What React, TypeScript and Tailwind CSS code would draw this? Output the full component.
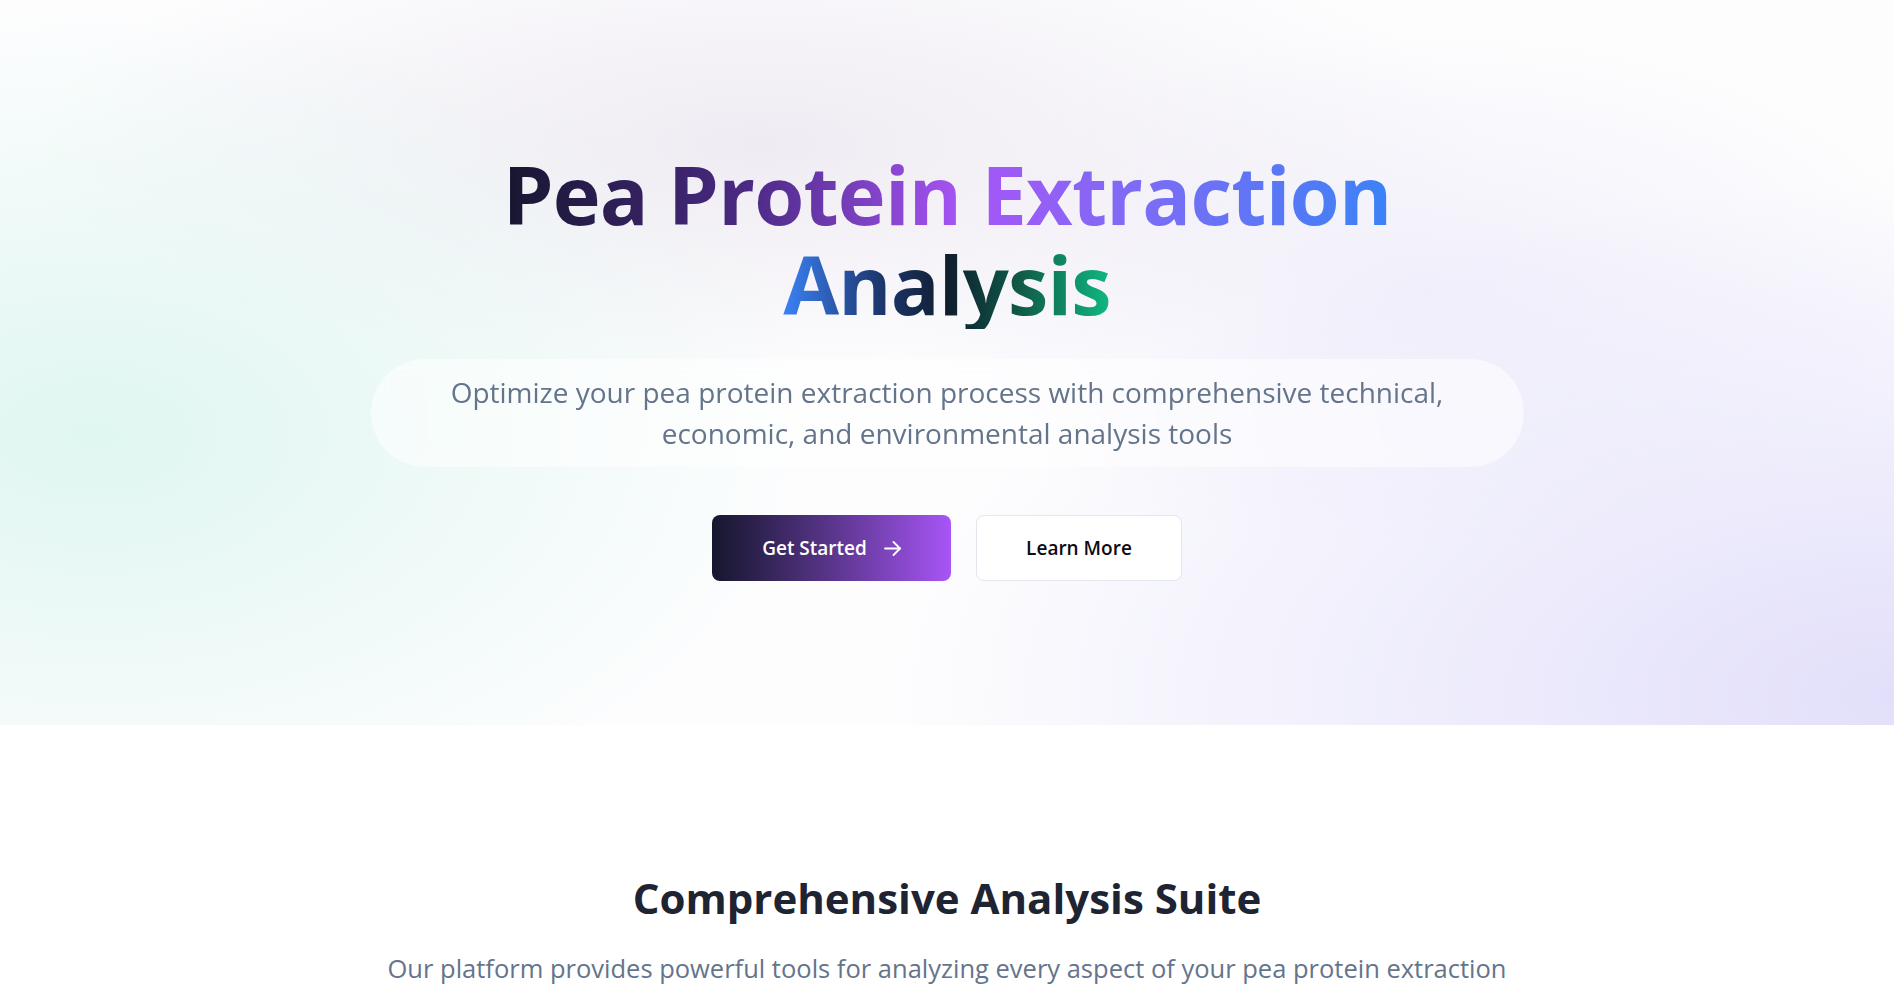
const font = "font-['Open_Sans','Noto_Sans',sans-serif]";

function ArrowIcon() {
  return (
    <svg width="17" height="15" viewBox="0 0 17 15" fill="none" stroke="currentColor" strokeWidth="1.8" strokeLinecap="round" strokeLinejoin="round">
      <path d="M1 7.5h15" />
      <path d="M9.5 1l6.5 6.5-6.5 6.5" />
    </svg>
  );
}

function Hero() {
  return (
    <section className="relative h-[725px] overflow-hidden bg-[#fdfdfe] bg-[radial-gradient(ellipse_48%_74%_at_5%_60%,rgba(222,246,240,0.95),transparent_80%),radial-gradient(ellipse_66%_88%_at_100%_96%,rgba(226,223,250,1),transparent_80%),radial-gradient(ellipse_48%_42%_at_40%_20%,rgba(238,234,242,0.95),transparent_80%),radial-gradient(ellipse_35%_45%_at_75%_40%,rgba(236,234,249,0.7),transparent_80%)]">
      <div className="flex flex-col items-center pt-[149px]">
        <h1 className="text-center text-[81px] font-bold leading-[90px] tracking-[-0.01em]">
          <span className="inline-block bg-[linear-gradient(90deg,#16162f_0%,#4c2a86_28%,#a855f7_52%,#7c6cf6_72%,#3b82f6_100%)] bg-clip-text text-transparent">
            Pea Protein Extraction
          </span>
          <br />
          <span className="inline-block bg-[linear-gradient(90deg,#3b82f6_0%,#1e3a75_28%,#0f1d2e_50%,#0f5a48_72%,#10b981_100%)] bg-clip-text text-transparent">
            Analysis
          </span>
        </h1>

        <div className="mt-[30px] w-[1153px] rounded-full bg-white/55 py-[13px] text-center backdrop-blur-sm">
          <p className="text-[28px] leading-[41px] text-[#64748b]">
            Optimize your pea protein extraction process with comprehensive technical,
            <br />
            economic, and environmental analysis tools
          </p>
        </div>

        <div className="mt-12 flex items-center gap-[25px]">
          <button className="flex h-[66px] w-[239px] items-center justify-center gap-[17px] rounded-lg bg-gradient-to-r from-[#16162f] to-[#a855f7] text-[19px] font-semibold text-white">
            Get Started
            <ArrowIcon />
          </button>
          <button className="flex h-[66px] w-[206px] items-center justify-center rounded-lg border border-[#e4e6ee] bg-white text-[19px] font-semibold text-[#0b0b14]">
            Learn More
          </button>
        </div>
      </div>
    </section>
  );
}

function Features() {
  return (
    <section className="bg-white pt-[148px] text-center">
      <h2 className="text-[42px] font-bold leading-[50px] text-[#1f2432]">
        Comprehensive Analysis Suite
      </h2>
      <p className="mx-auto mt-[27px] max-w-[1150px] text-[25.5px] leading-[36px] text-[#64748b]">
        Our platform provides powerful tools for analyzing every aspect of your pea protein extraction
        process, from yield to sustainability.
      </p>
      <div className="h-40" />
    </section>
  );
}

export default function App() {
  return (
    <div className={`min-h-screen bg-white ${font}`}>
      <Hero />
      <Features />
    </div>
  );
}
